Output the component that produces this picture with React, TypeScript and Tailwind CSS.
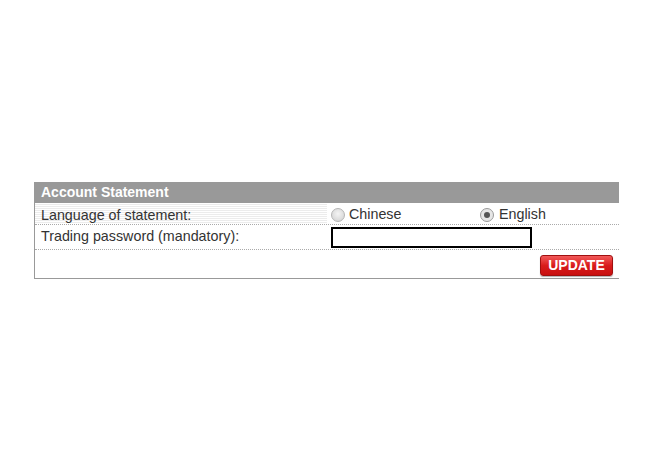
export default function App() {
  return (
    <div className="w-[650px] h-[462px] bg-white font-['Liberation_Sans',Arial,sans-serif] text-[14.3px] text-[#333]">
      <div className="pt-[182px] pl-[34px]">
        <section className="w-[585px] border-l border-b border-[#999]">
          {/* header */}
          <div className="h-[21px] bg-[#999] text-white font-bold text-[14px] pl-[6px] leading-[21px]">
            Account Statement
          </div>

          {/* language row */}
          <div className="flex h-[22px] border-b border-dotted border-[#aaa]">
            <div className="w-[292px] pl-[6px] leading-[24px] bg-[repeating-linear-gradient(to_bottom,#fff_0px,#fff_1px,#ececec_1px,#ececec_2px)]">
              Language of statement:
            </div>
            <label className="w-[151px] flex items-center pl-[4px] pt-[2px]">
              <span className="w-[14px] h-[14px] rounded-full border border-[#b5b5b5] bg-[radial-gradient(circle_at_50%_40%,#f4f4f4,#cfcfcf)] mr-[4px]" />
              Chinese
            </label>
            <label className="flex items-center pl-[2px] pt-[2px]">
              <span className="w-[14px] h-[14px] rounded-full border border-[#9a9a9a] bg-[#e6e6e6] mr-[5px] flex items-center justify-center">
                <span className="w-[6px] h-[6px] rounded-full bg-[#555]" />
              </span>
              English
            </label>
          </div>

          {/* password row */}
          <div className="flex h-[25px] border-b border-dotted border-[#aaa]">
            <div className="w-[292px] pl-[6px] leading-[22px]">Trading password (mandatory):</div>
            <div className="pl-[4px] pt-[2px]">
              <input type="password" className="w-[201px] h-[21px] border-2 border-black bg-white outline-none" />
            </div>
          </div>

          {/* actions */}
          <div className="h-[28px] flex justify-end items-start pt-[5px] pr-[6px]">
            <button className="h-[21px] w-[73px] rounded-[3px] border border-[#a01010] bg-[linear-gradient(to_bottom,#f25a5a,#d91c1c_50%,#c81010)] text-white font-bold text-[14px] leading-[19px] shadow-[0_1px_1px_rgba(0,0,0,0.3)]">
              UPDATE
            </button>
          </div>
        </section>
      </div>
    </div>
  );
}
